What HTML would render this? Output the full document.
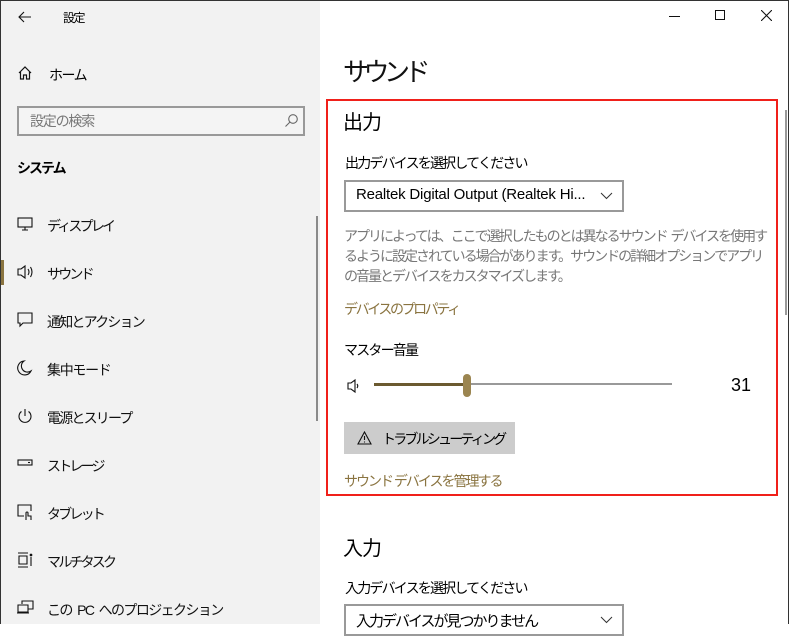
<!DOCTYPE html>
<html><head><meta charset="utf-8"><style>
*{margin:0;padding:0;box-sizing:border-box}
body{width:789px;height:624px;overflow:hidden;font-family:"Liberation Sans","Noto Sans CJK JP",sans-serif;color:#000;background:#fff;position:relative;word-spacing:2px}
.frame{position:absolute;left:0;top:0;width:789px;height:624px;border:1px solid #333;border-bottom:none}
.side{position:absolute;left:1px;top:1px;width:319px;height:623px;background:#f2f2f2}
.a{position:absolute;white-space:nowrap}
.j{letter-spacing:-2.6px}
.nav{position:absolute;left:46px;font-size:14px;color:#111;letter-spacing:-2.8px}
.ic{position:absolute;left:16px}
</style></head><body>
<div class="side">
  <svg class="a" style="left:17px;top:10px" width="14" height="12" viewBox="0 0 14 12" fill="none" stroke="#111" stroke-width="1.1"><path d="M13 6H1M6 1L1 6l5 5"/></svg>
  <div class="a j" style="left:62px;top:8px;font-size:12px;letter-spacing:-1.5px">設定</div>
  <svg class="ic" style="top:64px" width="16" height="16" viewBox="0 0 16 16" fill="none" stroke="#111" stroke-width="1.2"><path d="M2 8L8 2l6 6M3.5 7v7h3v-4h3v4h3V7"/></svg>
  <div class="a j" style="left:48px;top:64px;font-size:14px;letter-spacing:-1.5px">ホーム</div>
  <div class="a" style="left:16px;top:105px;width:288px;height:30px;border:2px solid #999;background:#f4f4f4"></div>
  <div class="a j" style="left:29px;top:110px;font-size:14px;color:#777;letter-spacing:-1.2px">設定の検索</div>
  <svg class="a" style="left:283px;top:112px" width="15" height="15" viewBox="0 0 15 15" fill="none" stroke="#666" stroke-width="1.1"><circle cx="9" cy="6" r="4.3"/><path d="M6 9l-4.5 4.5"/></svg>
  <div class="a" style="left:16px;top:157px;font-size:14px;font-weight:bold;letter-spacing:-2px">システム</div>
  <svg class="ic" style="top:216px" width="16" height="14" viewBox="0 0 16 14" fill="none" stroke="#111" stroke-width="1.1"><rect x="1" y="1" width="14" height="9"/><path d="M8 10v3M5 13h6"/></svg>
  <div class="nav" style="top:215px">ディスプレイ</div>
  <div class="a" style="left:0;top:259px;width:3px;height:25px;background:#8a7440"></div>
  <svg class="ic" style="top:263px" width="17" height="16" viewBox="0 0 17 16" fill="none" stroke="#111" stroke-width="1.1"><path d="M1 5h3l4-3v12l-4-3H1z"/><path d="M11 5q2 3 0 6M13.5 3q3 5 0 10"/></svg>
  <div class="nav" style="top:263px">サウンド</div>
  <svg class="ic" style="top:311px" width="16" height="16" viewBox="0 0 16 16" fill="none" stroke="#111" stroke-width="1.1"><path d="M1 1h14v10H6l-3 3v-3H1z"/></svg>
  <div class="nav" style="top:311px;letter-spacing:-1.8px">通知とアクション</div>
  <svg class="ic" style="top:359px" width="16" height="16" viewBox="0 0 16 16" fill="none" stroke="#111" stroke-width="1.1"><path d="M7 1a7 7 0 1 0 7 10A6 6 0 0 1 7 1z"/></svg>
  <div class="nav" style="top:359px;letter-spacing:-1.3px">集中モード</div>
  <svg class="ic" style="top:407px" width="16" height="16" viewBox="0 0 16 16" fill="none" stroke="#111" stroke-width="1.1"><path d="M8 1v7M4.5 3.5a6 6 0 1 0 7 0"/></svg>
  <div class="nav" style="top:407px;letter-spacing:-1.8px">電源とスリープ</div>
  <svg class="ic" style="top:458px" width="16" height="8" viewBox="0 0 16 8" fill="none" stroke="#111" stroke-width="1.1"><rect x="1" y="1" width="14" height="5"/><path d="M11 3.5h2"/></svg>
  <div class="nav" style="top:455px">ストレージ</div>
  <svg class="ic" style="top:503px" width="16" height="17" viewBox="0 0 16 17" fill="none" stroke="#111" stroke-width="1.1"><path d="M7 12H1V1h13v6"/><path d="M9 16v-7a1 1 0 0 1 2 0v3h3v4"/></svg>
  <div class="nav" style="top:503px">タブレット</div>
  <svg class="ic" style="top:551px" width="16" height="16" viewBox="0 0 16 16" fill="none" stroke="#111" stroke-width="1.1"><path d="M1 1h10M1 15h10M2 4h8v8H2zM14 5v9"/><circle cx="14" cy="3" r=".8" fill="#111"/></svg>
  <div class="nav" style="top:551px">マルチタスク</div>
  <svg class="ic" style="top:599px" width="17" height="14" viewBox="0 0 17 14" fill="none" stroke="#111" stroke-width="1.1"><path d="M5 4V1h11v8h-5M1 5h10v7H1zM0 13h12"/></svg>
  <div class="nav" style="top:599px;letter-spacing:-1.6px;word-spacing:3px">この PC へのプロジェクション</div>
  <div class="a" style="left:315px;top:215px;width:2px;height:205px;background:#8a8a8a"></div>
</div>
<div class="a" style="left:669px;top:16px;width:11px;height:1px;background:#111"></div>
<div class="a" style="left:715px;top:10px;width:10px;height:10px;border:1px solid #111"></div>
<svg class="a" style="left:761px;top:10px" width="11" height="11" viewBox="0 0 11 11" stroke="#111" stroke-width="1.1"><path d="M0 0l11 11M11 0L0 11"/></svg>
<div class="a" style="left:785px;top:110px;width:2px;height:205px;background:#999"></div>

<div class="a" style="left:343px;top:52px;font-size:26px;color:#111;letter-spacing:-5.5px">サウンド</div>
<div class="a" style="left:326px;top:99px;width:452px;height:397px;border:2px solid #f0201a"></div>
<div class="a" style="left:343px;top:106px;font-size:20px;letter-spacing:-1px">出力</div>
<div class="a" style="left:345px;top:153px;font-size:14px;letter-spacing:-1.8px">出力デバイスを選択してください</div>
<div class="a" style="left:344px;top:180px;width:280px;height:32px;border:2px solid #999"></div>
<div class="a" style="left:356px;top:186px;font-size:15px;letter-spacing:-0.2px;word-spacing:0">Realtek Digital Output (Realtek Hi...</div>
<svg class="a" style="left:600px;top:192px" width="13" height="8" viewBox="0 0 13 8" fill="none" stroke="#333"><path d="M1 1l5.5 5.5L12 1"/></svg>
<div class="a" style="left:344px;top:226px;font-size:14px;line-height:20px;color:#777;white-space:normal;width:428px;letter-spacing:-2px;word-spacing:2px">アプリによっては、ここで選択したものとは異なるサウンド デバイスを使用するように設定されている場合があります。サウンドの詳細オプションでアプリの音量とデバイスをカスタマイズします。</div>
<div class="a" style="left:344px;top:299px;font-size:14px;color:#8a7440;letter-spacing:-2.4px">デバイスのプロパティ</div>
<div class="a" style="left:344px;top:340px;font-size:14px;letter-spacing:-1.8px">マスター音量</div>
<svg class="a" style="left:347px;top:378px" width="14" height="16" viewBox="0 0 14 16" fill="none" stroke="#111" stroke-width="1.1"><path d="M1 5h3l4-3v12l-4-3H1z"/><path d="M10 6q1.5 2 0 4"/></svg>
<div class="a" style="left:374px;top:383px;width:298px;height:2px;background:#999"></div>
<div class="a" style="left:374px;top:383px;width:95px;height:3px;background:#6b5a30"></div>
<div class="a" style="left:463px;top:374px;width:8px;height:23px;border-radius:4px;background:#9b8550"></div>
<div class="a" style="left:731px;top:375px;font-size:18px">31</div>
<div class="a" style="left:344px;top:422px;width:171px;height:32px;background:#cccccc"></div>
<svg class="a" style="left:357px;top:431px" width="15" height="14" viewBox="0 0 15 14" fill="none" stroke="#111" stroke-width="1.1"><path d="M7.5 1L14 13H1z M7.5 5v4M7.5 10.5v1"/></svg>
<div class="a" style="left:382px;top:429px;font-size:14px;letter-spacing:-2.8px">トラブルシューティング</div>
<div class="a" style="left:344px;top:471px;font-size:14px;color:#8a7440;letter-spacing:-2px;word-spacing:0">サウンド デバイスを管理する</div>
<div class="a" style="left:343px;top:532px;font-size:20px;letter-spacing:-1px">入力</div>
<div class="a" style="left:345px;top:578px;font-size:14px;letter-spacing:-1.8px">入力デバイスを選択してください</div>
<div class="a" style="left:344px;top:604px;width:280px;height:32px;border:2px solid #999"></div>
<div class="a" style="left:356px;top:610px;font-size:15px;letter-spacing:-2px">入力デバイスが見つかりません</div>
<svg class="a" style="left:600px;top:616px" width="13" height="8" viewBox="0 0 13 8" fill="none" stroke="#333"><path d="M1 1l5.5 5.5L12 1"/></svg>
<div class="frame"></div>
</body></html>
